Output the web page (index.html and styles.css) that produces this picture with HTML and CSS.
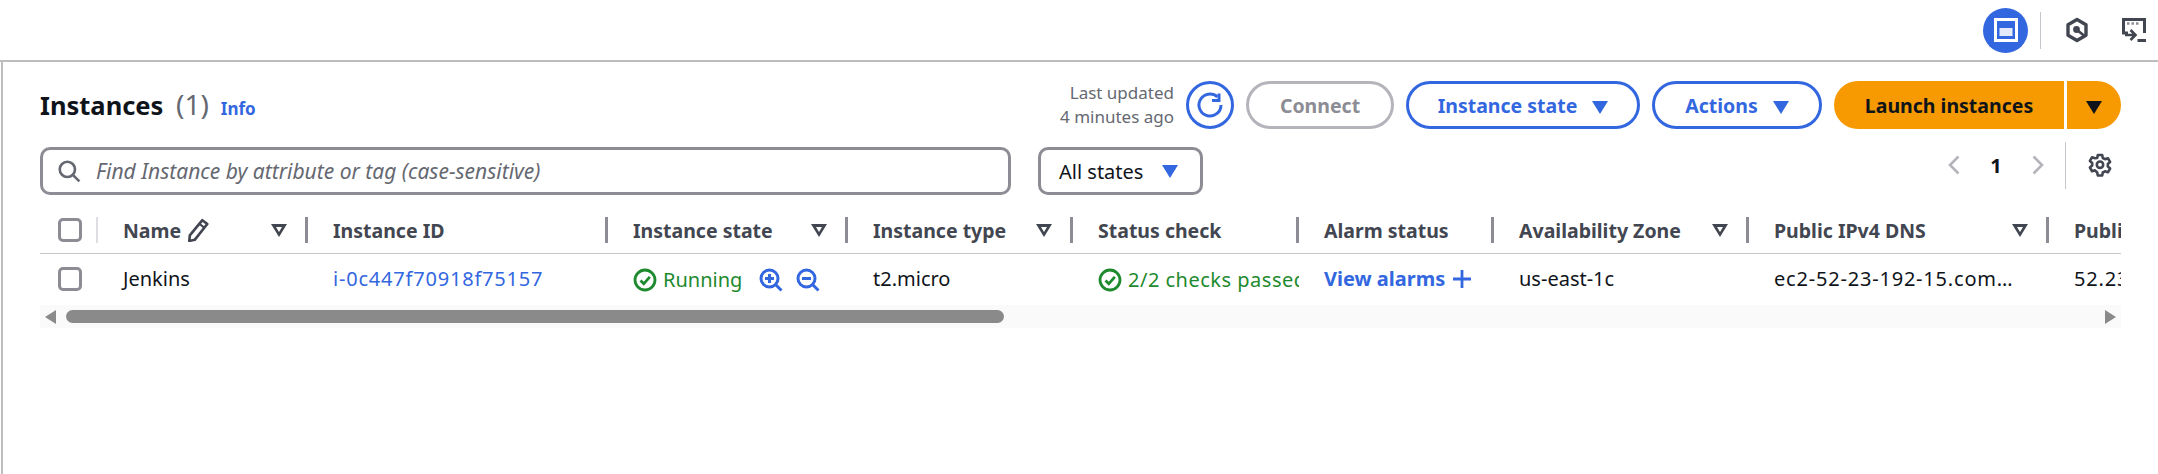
FILE: index.html
```html
<!DOCTYPE html>
<html lang="en">
<head>
  <meta charset="UTF-8" />
  <title>Instances | EC2</title>
  <link rel="stylesheet" href="styles.css">
</head>
<body>
  <header class="topbar">
    <span class="panel-btn">
      <svg width="24" height="24" viewBox="0 0 24 24"><rect x="1.5" y="1.5" width="21" height="21" fill="none" stroke="#fff" stroke-width="3"/><rect x="5.500" y="10" width="13" height="8" fill="#e4e9fa"/></svg>
    </span>
    <span class="topbar-sep"></span>
    <svg class="hex-icon" width="24" height="26" viewBox="0 0 24 26"><path d="M12 2.500l9 5.200v10.600l-9 5.200-9-5.200V7.700z" fill="none" stroke="#424650" stroke-width="3.400" stroke-linejoin="round"/><circle cx="11.500" cy="12.500" r="3.400" fill="#424650"/><path d="M12 13l7 5.500" stroke="#424650" stroke-width="2.800"/></svg>
    <svg class="term-icon" width="24" height="24" viewBox="0 0 24 24"><path d="M6 15H1.500V1.500h21V15" fill="none" stroke="#424650" stroke-width="3"/><path d="M5 5.500h2.500M9.500 5.500H12M14 5.500h2.500" stroke="#8c8c94" stroke-width="2.500"/><path d="M3 17h10M8.500 12l5 5-5 5" fill="none" stroke="#424650" stroke-width="2.600"/><path d="M15.500 22.500H24" stroke="#424650" stroke-width="3"/></svg>
  </header>

  <main class="content">
    <div class="head-row">
      <h1 class="title">Instances <span class="count">(1)</span></h1>
      <a class="info">Info</a>
      <div class="updated">Last updated<br>4 minutes ago</div>
      <button class="btn-round">
        <svg width="30" height="30" viewBox="0 0 30 30"><path d="M26 15a11 11 0 1 1-3.600-8.100" fill="none" stroke="#3367e0" stroke-width="3"/><path d="M24 3.500V10.500h-7" fill="none" stroke="#3367e0" stroke-width="3"/></svg>
      </button>
      <button class="btn btn-disabled btn-connect">Connect</button>
      <button class="btn btn-state">Instance state <i class="caret"></i></button>
      <button class="btn btn-actions">Actions <i class="caret"></i></button>
      <div class="launch">
        <button class="launch-main">Launch instances</button>
        <button class="launch-drop"><i class="caret caret-dark"></i></button>
      </div>
    </div>

    <div class="filter-row">
      <label class="search">
        <svg width="24" height="24" viewBox="0 0 22 22"><circle cx="9.500" cy="9.500" r="7" fill="none" stroke="#656871" stroke-width="2.400"/><path d="M14.500 14.500l6 6" stroke="#656871" stroke-width="2.400"/></svg>
        <span class="placeholder">Find Instance by attribute or tag (case-sensitive)</span>
      </label>
      <div class="states">All states <i class="caret"></i></div>
      <div class="pager">
        <svg class="chev" width="12" height="20" viewBox="0 0 12 20"><path d="M10.500 1.500L2 10l8.500 8.500" fill="none" stroke="#b4b4bb" stroke-width="2.600"/></svg>
        <span class="page-num">1</span>
        <svg class="chev" width="12" height="20" viewBox="0 0 12 20"><path d="M1.500 1.500L10 10l-8.500 8.500" fill="none" stroke="#b4b4bb" stroke-width="2.600"/></svg>
        <span class="pager-sep"></span>
        <svg width="24" height="24" viewBox="0 0 24 24"><path d="M9.800 2h4.400l.6 3 2.200 1.200 2.900-1 2.200 3.800-2.300 2v2.500l2.300 2-2.200 3.800-2.900-1-2.200 1.200-.6 3H9.800l-.6-3L7 17.300l-2.900 1-2.200-3.800 2.300-2v-2.500l-2.300-2 2.200-3.800 2.900 1L9.200 5z" fill="none" stroke="#424650" stroke-width="2.600" stroke-linejoin="round"/><circle cx="12" cy="11.700" r="3.200" fill="none" stroke="#424650" stroke-width="2.600"/></svg>
      </div>
    </div>

    <div class="table-wrap">
      <table class="grid">
        <colgroup>
          <col class="c-check"><col class="c-name"><col class="c-id"><col class="c-state"><col class="c-type"><col class="c-status"><col class="c-alarm"><col class="c-az"><col class="c-dns"><col class="c-ip">
        </colgroup>
        <thead>
          <tr>
            <th><div class="th-check"><span class="checkbox"></span></div></th>
            <th><div class="th-in">Name
              <svg class="pencil" width="22" height="24" viewBox="0 0 20 22"><path d="M14 2l4.500 3.500L7 20l-5 1 .5-5z" fill="none" stroke="#424650" stroke-width="2.400" stroke-linejoin="round"/><path d="M11.500 5.500l4.500 3.500" stroke="#424650" stroke-width="2"/></svg>
              <i class="filter"></i></div></th>
            <th><div class="th-in">Instance ID</div></th>
            <th><div class="th-in">Instance state <i class="filter"></i></div></th>
            <th><div class="th-in">Instance type <i class="filter"></i></div></th>
            <th><div class="th-in">Status check</div></th>
            <th><div class="th-in">Alarm status</div></th>
            <th><div class="th-in">Availability Zone <i class="filter"></i></div></th>
            <th><div class="th-in">Public IPv4 DNS <i class="filter"></i></div></th>
            <th><div class="th-in th-last">Public IPv4 address</div></th>
          </tr>
        </thead>
        <tbody>
          <tr>
            <td class="td-check"><span class="checkbox"></span></td>
            <td>Jenkins</td>
            <td><a class="link num">i-0c447f70918f75157</a></td>
            <td>
              <span class="status">
                <svg width="24" height="24" viewBox="0 0 24 24"><circle cx="12" cy="12" r="10" fill="none" stroke="#1e8a2e" stroke-width="2.800"/><path d="M7.500 12.500l3.300 3.300 6-7" fill="none" stroke="#1e8a2e" stroke-width="2.800"/></svg>
                Running
              </span>
              <svg class="zoom-in" width="24" height="24" viewBox="0 0 24 24"><circle cx="10.500" cy="10.500" r="8.500" fill="none" stroke="#3367e0" stroke-width="3"/><path d="M16.500 16.500l6 6" stroke="#3367e0" stroke-width="3"/><path d="M6 10.500h9M10.500 6v9" stroke="#3367e0" stroke-width="3"/></svg>
              <svg class="zoom-out" width="24" height="24" viewBox="0 0 24 24"><circle cx="10.500" cy="10.500" r="8.500" fill="none" stroke="#3367e0" stroke-width="3"/><path d="M16.500 16.500l6 6" stroke="#3367e0" stroke-width="3"/><path d="M6 10.500h9" stroke="#3367e0" stroke-width="3"/></svg>
            </td>
            <td>t2.micro</td>
            <td>
              <span class="status status-wide">
                <svg width="24" height="24" viewBox="0 0 24 24"><circle cx="12" cy="12" r="10" fill="none" stroke="#1e8a2e" stroke-width="2.800"/><path d="M7.500 12.500l3.300 3.300 6-7" fill="none" stroke="#1e8a2e" stroke-width="2.800"/></svg>
                2/2 checks passed
              </span>
            </td>
            <td><a class="link link-bold">View alarms
              <svg width="20" height="20" viewBox="0 0 20 20"><path d="M1 10h18M10 1v18" stroke="#3367e0" stroke-width="2.800"/></svg></a></td>
            <td>us-east-1c</td>
            <td class="num">ec2-52-23-192-15.com…</td>
            <td class="num">52.23.192.15</td>
          </tr>
        </tbody>
      </table>
      <div class="hscroll">
        <i class="arrow-left"></i>
        <div class="thumb"></div>
        <i class="arrow-right"></i>
      </div>
    </div>
  </main>
</body>
</html>
```

FILE: styles.css
```css
* {
  box-sizing: border-box;
}
body {
  margin: 0;
  background: #fff;
  color: #0f141a;
  font-family: "Noto Sans", "Open Sans", sans-serif;
  font-size: 20px;
  overflow: hidden;
}

/* top bar */
.topbar {
  height: 62px;
  border-bottom: 2px solid #bdbdbd;
  display: flex;
  align-items: center;
  padding-right: 12px;
  justify-content: flex-end;
}
.panel-btn {
  width: 45px;
  height: 45px;
  border-radius: 50%;
  background: #3367e0;
  display: flex;
  align-items: center;
  justify-content: center;
}
.topbar-sep {
  width: 1px;
  height: 37px;
  background: #c6c6cd;
  margin: 0 24px 0 12px;
}
.term-icon {
  margin-left: 33px;
}

/* page content */
.content {
  height: 412px;
  border-left: 2px solid #bdbdbd;
  margin-left: 1px;
  padding: 19px 37px 0 37px;
}
.head-row {
  display: flex;
  align-items: center;
  height: 48px;
}
.title {
  margin: -2px 0 0;
  font-size: 25.5px;
  font-weight: 700;
  line-height: 48px;
}
.count {
  font-weight: 400;
  font-size: 28px;
  margin-left: 6px;
  color: #656871;
}
.info {
  color: #3367e0;
  font-size: 17px;
  font-weight: 700;
  margin: 6px 0 0 12px;
}
.updated {
  margin-left: auto;
  margin-right: 12px;
  text-align: right;
  font-size: 17px;
  line-height: 24px;
  color: #656871;
}
button {
  font-family: inherit;
}
.btn-round {
  width: 48px;
  height: 48px;
  border: 3px solid #3367e0;
  border-radius: 50%;
  background: #fff;
  padding: 0;
  display: flex;
  align-items: center;
  justify-content: center;
}
.btn {
  height: 48px;
  border: 3px solid #3367e0;
  border-radius: 24px;
  background: #fff;
  color: #3367e0;
  font-size: 19.5px;
  font-weight: 700;
  margin-left: 12px;
  padding: 0;
}
.btn-disabled {
  border-color: #b4b4bb;
  color: #8c8c94;
}
.btn-connect { width: 148px; }
.btn-state { width: 234px; }
.btn-actions { width: 170px; }
.caret {
  display: inline-block;
  width: 0;
  height: 0;
  border-left: 8px solid transparent;
  border-right: 8px solid transparent;
  border-top: 13px solid #3367e0;
  margin-left: 10px;
  vertical-align: -1px;
}
.caret-dark {
  border-top-color: #0f141a;
  margin-left: 0;
}
.launch {
  display: flex;
  margin-left: 12px;
  height: 48px;
}
.launch-main,
.launch-drop {
  border: 0;
  background: #f79900;
  color: #0f141a;
  font-size: 19.5px;
  font-weight: 700;
  padding: 0;
}
.launch-main {
  width: 230px;
  border-radius: 24px 0 0 24px;
}
.launch-drop {
  width: 54px;
  margin-left: 3px;
  border-radius: 0 24px 24px 0;
}

/* search row */
.filter-row {
  display: flex;
  margin-top: 18px;
  height: 48px;
}
.search {
  width: 971px;
  border: 3px solid #8c8c94;
  border-radius: 10px;
  display: flex;
  align-items: center;
  padding-left: 14px;
  gap: 15px;
}
.placeholder {
  font-style: italic;
  font-size: 21px;
  color: #656871;
}
.states {
  width: 165px;
  margin-left: 27px;
  border: 3px solid #8c8c94;
  border-radius: 10px;
  display: flex;
  align-items: center;
  padding-left: 18px;
  white-space: nowrap;
}
.states .caret {
  margin-left: 19px;
}
.pager {
  margin-left: auto;
  margin-right: 9px;
  height: 48px;
  margin-top: -6px;
  display: flex;
  align-items: center;
}
.page-num {
  font-weight: 700;
  width: 72px;
  text-align: center;
  color: #0f141a;
}
.pager-sep {
  width: 1px;
  height: 47px;
  background: #c6c6cd;
  margin: 0 22px 0 21px;
}

/* table */
.table-wrap {
  width: 2081px;
  margin-top: 12px;
  overflow: hidden;
}
.grid {
  table-layout: fixed;
  width: 2209px;
  border-collapse: separate;
  border-spacing: 0;
}
.c-check { width: 58px; }
.c-name { width: 210px; }
.c-id { width: 300px; }
.c-state { width: 240px; }
.c-type { width: 225px; }
.c-status { width: 226px; }
.c-alarm { width: 195px; }
.c-az { width: 255px; }
.c-dns { width: 300px; }
.c-ip { width: 200px; }
.grid th {
  height: 47px;
  padding: 0;
  border-bottom: 1px solid #c6c6cd;
  text-align: left;
  color: #424650;
  font-weight: 700;
  font-size: 19.5px;
}
.th-check {
  display: flex;
  align-items: center;
  height: 26px;
  padding-left: 18px;
  border-right: 2px solid #dedee3;
}
.th-in {
  height: 26px;
  display: flex;
  align-items: center;
  white-space: nowrap;
  padding-left: 25px;
  padding-right: 18px;
  border-right: 3px solid #8c8c94;
}
.th-last {
  border-right: 0;
}
.filter {
  margin-left: auto;
  width: 0;
  height: 0;
  border-left: 8px solid transparent;
  border-right: 8px solid transparent;
  border-top: 13px solid #424650;
  position: relative;
}
.filter::after {
  content: "";
  position: absolute;
  left: -3px;
  top: -10px;
  border-left: 3px solid transparent;
  border-right: 3px solid transparent;
  border-top: 5px solid #fff;
}
.pencil {
  margin-left: 6px;
}
.checkbox {
  display: block;
  width: 24px;
  height: 24px;
  border: 3px solid #8c8c94;
  border-radius: 5px;
}
.grid td {
  height: 51px;
  padding: 0 0 2px 25px;
  white-space: nowrap;
  overflow: hidden;
  vertical-align: middle;
}
.grid td.td-check {
  padding-left: 18px;
}
.link {
  color: #3367e0;
}
.num {
  letter-spacing: .8px;
}
.link-bold {
  font-weight: 700;
  display: inline-flex;
  align-items: center;
  gap: 7px;
}
.status {
  color: #1e8a2e;
  display: inline-flex;
  align-items: center;
  gap: 6px;
  vertical-align: middle;
}
.status-wide {
  letter-spacing: .5px;
}
.zoom-in {
  margin-left: 11px;
  vertical-align: middle;
}
.zoom-out {
  margin-left: 8px;
  vertical-align: middle;
}
.hscroll {
  height: 23px;
  background: #fafafa;
  display: flex;
  align-items: center;
  padding: 0 5px;
}
.thumb {
  width: 938px;
  height: 13px;
  border-radius: 7px;
  background: #8a8a8a;
  margin-left: 10px;
}
.arrow-left {
  width: 0;
  height: 0;
  border-top: 7px solid transparent;
  border-bottom: 7px solid transparent;
  border-right: 11px solid #8a8a8a;
}
.arrow-right {
  width: 0;
  height: 0;
  margin-left: auto;
  border-top: 7px solid transparent;
  border-bottom: 7px solid transparent;
  border-left: 11px solid #8a8a8a;
}
```
